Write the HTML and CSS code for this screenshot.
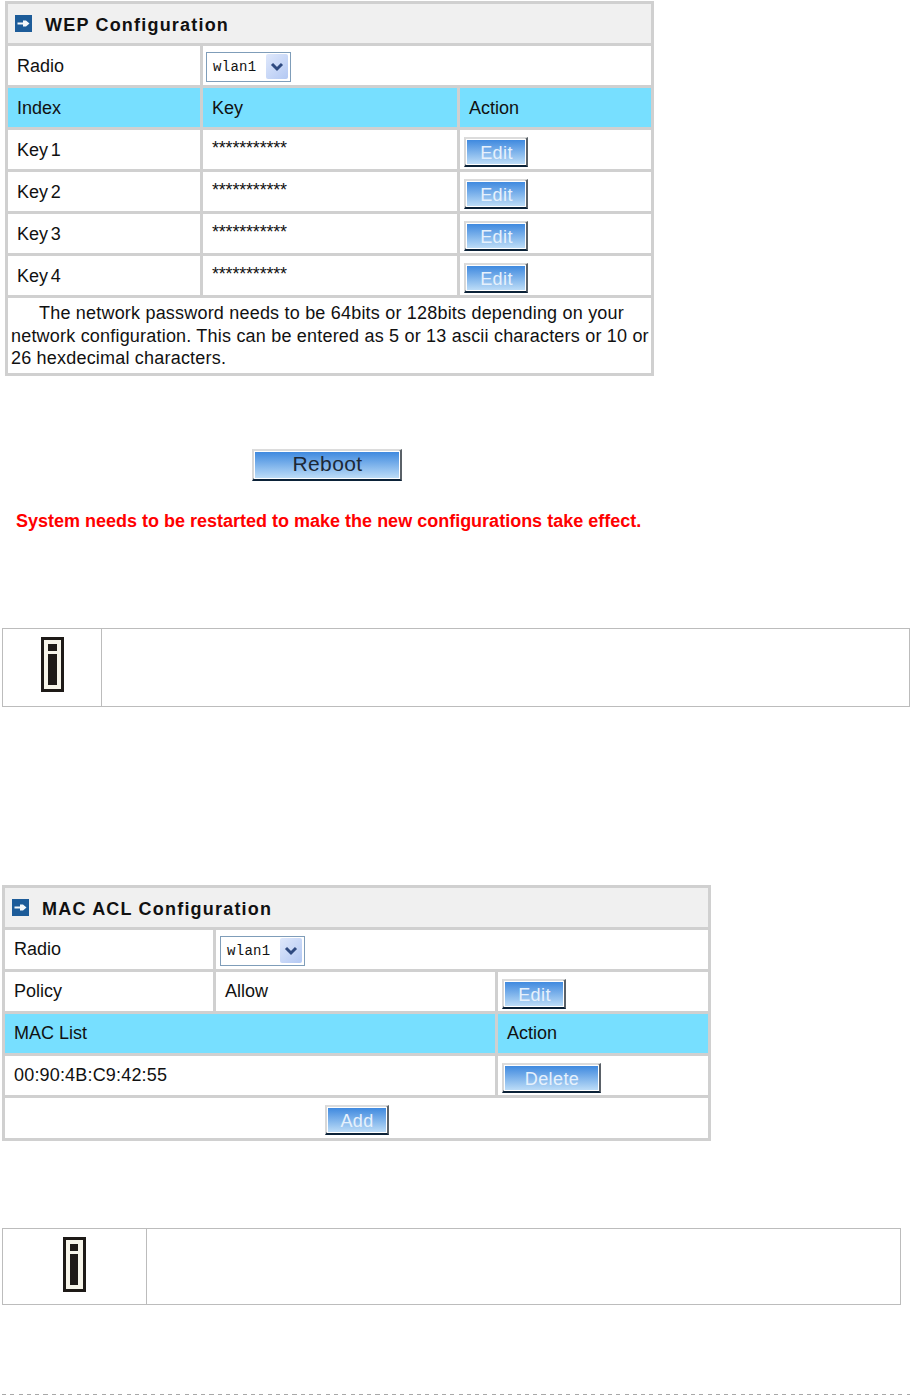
FILE: index.html
```html
<!DOCTYPE html>
<html lang="en">
<head>
<meta charset="utf-8">
<title>WEP and MAC ACL Configuration</title>
<link rel="stylesheet" href="styles.css">
</head>
<body>
<section class="panel panel-wep">
  <div class="cell title span-3"><svg class="title-icon" viewBox="0 0 17 17"><rect width="17" height="17" fill="#1d5c99"/><path d="M2.500 7.500H8V5.500h3l3.500 3-3.500 3H8v-2H2.500z" fill="#f4f8fb"/></svg><span>WEP Configuration</span></div>
  <div class="cell">Radio</div>
  <div class="cell span-2 select-cell"><div class="select"><span>wlan1</span><span class="select-arrow"><svg viewBox="0 0 22 25"><path d="M6 10l5 5 5-5" fill="none" stroke="#2f4a80" stroke-width="3"/></svg></span></div></div>
  <div class="cell head">Index</div><div class="cell head">Key</div><div class="cell head">Action</div>
  <div class="cell key-label">Key 1</div><div class="cell stars">***********</div><div class="cell btn-cell"><button class="btn">Edit</button></div>
  <div class="cell key-label">Key 2</div><div class="cell stars">***********</div><div class="cell btn-cell"><button class="btn">Edit</button></div>
  <div class="cell key-label">Key 3</div><div class="cell stars">***********</div><div class="cell btn-cell"><button class="btn">Edit</button></div>
  <div class="cell key-label">Key 4</div><div class="cell stars">***********</div><div class="cell btn-cell"><button class="btn">Edit</button></div>
  <p class="note span-3">The network password needs to be 64bits or 128bits depending on your network configuration. This can be entered as 5 or 13 ascii characters or 10 or 26 hexdecimal characters.</p>
</section>

<button class="btn btn-reboot">Reboot</button>
<p class="warning">System needs to be restarted to make the new configurations take effect.</p>

<div class="info info-one">
  <div class="info-icon"><svg class="i-icon" viewBox="0 0 23 55"><rect x="1.500" y="1.500" width="20" height="52" fill="#f7f5ea" stroke="#1e1a17" stroke-width="3"/><rect x="7" y="7" width="9" height="7" fill="#1e1a17"/><rect x="7" y="17" width="9" height="31" fill="#1e1a17"/></svg></div>
  <div class="info-body"></div>
</div>

<section class="panel panel-mac">
  <div class="cell title span-3"><svg class="title-icon" viewBox="0 0 17 17"><rect width="17" height="17" fill="#1d5c99"/><path d="M2.500 7.500H8V5.500h3l3.500 3-3.500 3H8v-2H2.500z" fill="#f4f8fb"/></svg><span>MAC ACL Configuration</span></div>
  <div class="cell">Radio</div>
  <div class="cell span-2 select-cell"><div class="select"><span>wlan1</span><span class="select-arrow"><svg viewBox="0 0 22 25"><path d="M6 10l5 5 5-5" fill="none" stroke="#2f4a80" stroke-width="3"/></svg></span></div></div>
  <div class="cell">Policy</div><div class="cell">Allow</div><div class="cell btn-cell"><button class="btn">Edit</button></div>
  <div class="cell head span-2">MAC List</div><div class="cell head">Action</div>
  <div class="cell span-2 mac-address">00:90:4B:C9:42:55</div><div class="cell btn-cell"><button class="btn btn-wide">Delete</button></div>
  <div class="cell btn-cell center span-3"><button class="btn">Add</button></div>
</section>

<div class="info info-two">
  <div class="info-icon"><svg class="i-icon" viewBox="0 0 23 55"><rect x="1.500" y="1.500" width="20" height="52" fill="#f7f5ea" stroke="#1e1a17" stroke-width="3"/><rect x="7" y="7" width="8" height="7" fill="#1e1a17"/><rect x="7" y="17" width="8" height="31" fill="#1e1a17"/></svg></div>
  <div class="info-body"></div>
</div>

<hr class="rule">
</body>
</html>
```
FILE: styles.css
```css
* { box-sizing: border-box; }
html, body { margin: 0; padding: 0; background: #fff; }
body {
  font-family: "Liberation Sans", Arial, sans-serif;
  font-size: 18px;
  color: #111;
  height: 1397px;
  overflow: hidden;
}
.panel {
  display: grid;
  gap: 3px;
  padding: 3px;
  background: #d0d0d0;
}
.panel-wep {
  --text-top: 2px;
  width: 649px;
  margin: 1px 0 0 5px;
  grid-template-columns: 192px 254px 191px;
  grid-template-rows: repeat(7, 39px) 75px;
}
.panel-mac {
  --text-top: 0px;
  width: 709px;
  margin: 178px 0 0 2px;
  grid-template-columns: 208px 279px 210px;
  grid-template-rows: repeat(5, 39px) 40px;
}
.span-2 { grid-column: span 2; }
.span-3 { grid-column: span 3; }
.cell {
  display: flex;
  align-items: center;
  padding: var(--text-top) 9px 0;
  background: #fff;
  white-space: nowrap;
}
.title {
  background: #f0f0f0;
  padding: 3px 0 0 7px;
  gap: 13px;
  font-weight: 700;
  letter-spacing: 1.200px;
  color: #111;
}
.title-icon { width: 17px; height: 17px; flex: none; margin-top: -3px; }
.head { background: #77dfff; }
.key-label { word-spacing: -2.200px; }
.mac-address { letter-spacing: 0.180px; }
.stars { padding-bottom: 5px; letter-spacing: -0.200px; }
.select-cell { padding: 2px 0 0 3px; }
.panel-mac .select-cell { padding-left: 4px; }
.btn-cell { padding: 7px 0 0 4px; align-items: flex-start; }
.center { justify-content: center; padding-left: 0; }
.note {
  margin: 0;
  background: #fff;
  padding: 4px 0 0 3px;
  text-indent: 28px;
  line-height: 22.5px;
  letter-spacing: 0.200px;
}
.select {
  width: 85px;
  height: 30px;
  border: 1px solid #7f9db9;
  background: #fff;
  display: flex;
  align-items: center;
  justify-content: space-between;
  padding: 0 2px 0 6px;
  font-family: "Liberation Mono", monospace;
  font-size: 14px;
  letter-spacing: 0.300px;
}
.select-arrow {
  width: 22px;
  height: 25px;
  background: linear-gradient(135deg, #dfe8fb, #b3c8f3);
  border-radius: 2px;
  display: flex;
}
.select-arrow svg { width: 22px; height: 25px; }
.btn {
  display: block;
  width: 64px;
  height: 30px;
  padding: 2px 0 0 2px;
  border-style: solid;
  border-width: 2px 3px 3px 2px;
  border-color: #dcdcdc #5a6168 #0b2238 #d8d8d8;
  outline: 1px solid #fff;
  outline-offset: -3px;
  background: linear-gradient(#3a86de, #bcdcf7);
  color: #e6f1fc;
  font-family: "Liberation Sans", Arial, sans-serif;
  font-size: 18px;
  line-height: 1;
  letter-spacing: 0.400px;
}
.btn-wide { width: 99px; }
.btn-reboot {
  width: 150px;
  height: 32px;
  margin: 73px 0 0 252px;
  padding: 0 0 2px 2px;
  color: #1c2836;
  font-size: 21px;
  letter-spacing: 0.400px;
}
.warning {
  margin: 29px 0 0 16px;
  color: #f00;
  font-weight: 700;
  font-size: 18px;
  line-height: 22px;
  white-space: nowrap;
}
.info {
  display: flex;
  border: 1px solid #bcbcbc;
  background: #fff;
}
.info-one { width: 908px; height: 79px; margin: 96px 0 0 2px; }
.info-two { width: 899px; height: 77px; margin: 87px 0 0 2px; }
.info-one .info-icon { flex: 0 0 99px; }
.info-two .info-icon { flex: 0 0 144px; }
.info-icon {
  border-right: 1px solid #bcbcbc;
  display: flex;
  justify-content: center;
  padding-top: 8px;
}
.i-icon { width: 23px; height: 55px; display: block; }
.info-body { flex: 1; }
.rule {
  margin: 89px 0 0 2px;
  width: 908px;
  height: 1px;
  border: 0;
  background: repeating-linear-gradient(90deg, #a8a8a8 0 4px, transparent 4px 8.300px);
}
```
